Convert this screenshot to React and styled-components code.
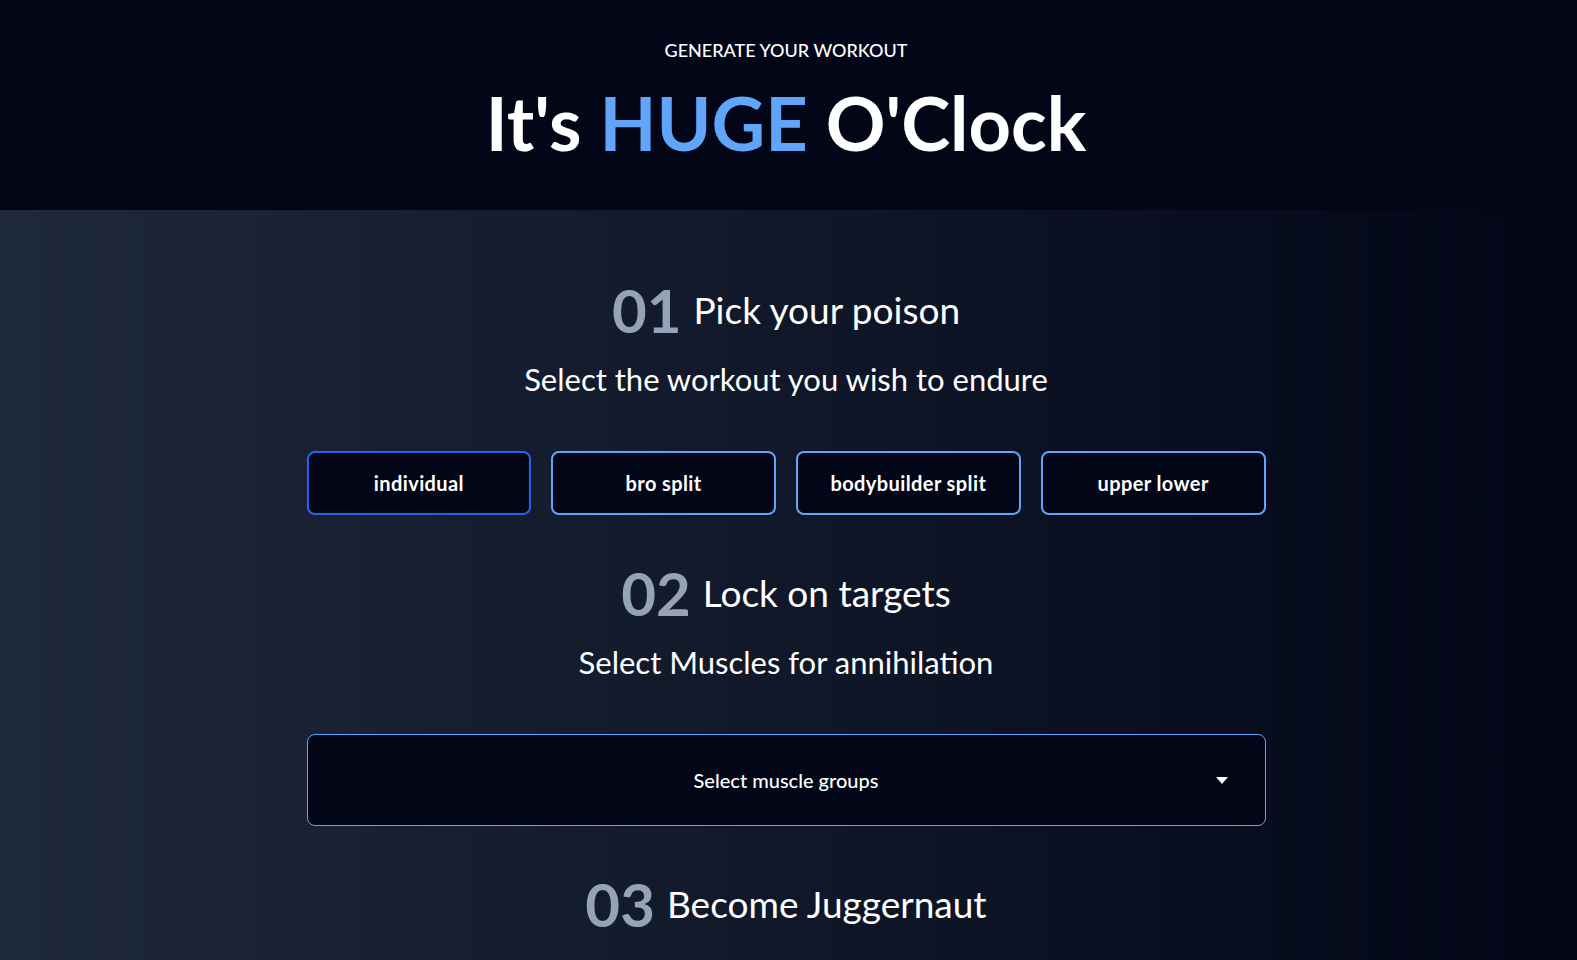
import React, { useState } from 'react';
import styled, { createGlobalStyle } from 'styled-components';

const GlobalStyle = createGlobalStyle`
    *{
        box-sizing: border-box;
    }
    body{
        margin: 0;
        background: #020617;
        font-family: 'Lato', 'Open Sans', sans-serif;
        color: #fff;
    }
`;

const workouts = ['individual', 'bro split', 'bodybuilder split', 'upper lower'];

const App = () => {
    const [poison, setPoison] = useState('individual');
    return (
        <>
            <GlobalStyle />
            <StyledHero>
                <StyledEyebrow>GENERATE YOUR WORKOUT</StyledEyebrow>
                <StyledTitle>It's <span>HUGE</span> O'Clock</StyledTitle>
            </StyledHero>
            <StyledMain>
                <StyledSection>
                    <SectionHeader index="01" title="Pick your poison" description="Select the workout you wish to endure" />
                    <StyledGrid>
                        {workouts.map((w) => (
                            <StyledPoison key={w} $active={w === poison} onClick={() => setPoison(w)}>
                                {w}
                            </StyledPoison>
                        ))}
                    </StyledGrid>
                </StyledSection>
                <StyledSection>
                    <SectionHeader index="02" title="Lock on targets" description="Select Muscles for annihilation" />
                    <StyledSelect>
                        <span>Select muscle groups</span>
                        <StyledCaret viewBox="0 0 12 8">
                            <path d="M0 0h12L6 7z" fill="#fff" />
                        </StyledCaret>
                    </StyledSelect>
                </StyledSection>
                <StyledSection>
                    <SectionHeader index="03" title="Become Juggernaut" />
                </StyledSection>
            </StyledMain>
        </>
    );
};

const SectionHeader = ({ index, title, description }) => (
    <StyledSectionHeader>
        <StyledHeading>
            <b>{index}</b>
            <span>{title}</span>
        </StyledHeading>
        {description && <StyledDescription>{description}</StyledDescription>}
    </StyledSectionHeader>
);

const StyledHero = styled.header`
    background: #020617;
    display: flex;
    flex-direction: column;
    align-items: center;
    gap: 22px;
    padding: 36px 21px 50px 16px;
`;

const StyledEyebrow = styled.p`
    margin: 0;
    font-size: 18px;
    line-height: 28px;
    font-weight: 500;
`;

const StyledTitle = styled.h1`
    margin: 0;
    font-size: 74px;
    line-height: 74px;
    font-weight: 700;
    span{
        color: #60a5fa;
    }
`;

const StyledMain = styled.main`
    min-height: 760px;
    background: linear-gradient(to right, #1e293b, #020617);
    display: flex;
    flex-direction: column;
    align-items: center;
    gap: 48px;
    padding: 70px 21px 60px 16px;
`;

const StyledSection = styled.section`
    width: 100%;
    max-width: 959px;
    display: flex;
    flex-direction: column;
    align-items: center;
    gap: 54px;
`;

const StyledSectionHeader = styled.div`
    display: flex;
    flex-direction: column;
    align-items: center;
    gap: 21px;
`;

const StyledHeading = styled.h2`
    margin: 0;
    display: flex;
    align-items: center;
    gap: 12px;
    line-height: 60px;
    b{
        font-size: 60px;
        font-weight: 700;
        color: #94a3b8;
    }
    span{
        font-size: 37px;
        font-weight: 400;
    }
`;

const StyledDescription = styled.p`
    margin: 0;
    font-size: 31px;
    line-height: 36px;
`;

const StyledGrid = styled.div`
    width: 100%;
    display: grid;
    grid-template-columns: repeat(4, 1fr);
    gap: 20px;
`;

const StyledPoison = styled.button`
    height: 64px;
    background: #020617;
    border: 2px solid ${(p) => (p.$active ? '#2563eb' : '#60a5fa')};
    border-radius: 8px;
    color: #fff;
    font-family: inherit;
    font-size: 20px;
    letter-spacing: 0.4px;
    font-weight: 700;
    cursor: pointer;
`;

const StyledSelect = styled.div`
    position: relative;
    width: 100%;
    height: 92px;
    background: #020617;
    border: 1px solid #60a5fa;
    border-radius: 8px;
    display: flex;
    align-items: center;
    justify-content: center;
    font-size: 20px;
    font-weight: 500;
`;

const StyledCaret = styled.svg`
    position: absolute;
    right: 37px;
    top: 42px;
    width: 12px;
    height: 8px;
`;

export default App;
